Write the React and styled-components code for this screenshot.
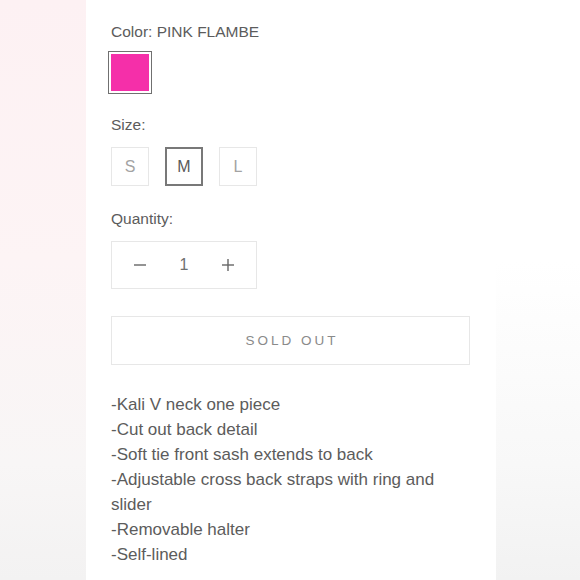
import React from 'react';
import styled, { createGlobalStyle } from 'styled-components';

// colours taken from the shot
let textColor = "#5c5c5c"
let lightLine = "#e7e7e7"
let pink = "#f52fa9"

const GlobalStyle = createGlobalStyle`
    html, body {
        margin: 0;
        padding: 0;
        background: #ffffff;
    }
    body {
        font-family: "Liberation Sans", Arial, sans-serif;
        color: ${textColor};
    }
`;

const Page = styled.div`
    display: flex;
    width: 580px;
    height: 580px;
    overflow: hidden;
`;

const SideBlur = styled.div`
    flex: ${props => (props.left ? '0 0 86px' : '1')};
    background: ${props => (props.left
        ? 'linear-gradient(to bottom, #fdf1f3 0%, #fdf4f5 45%, #f8f6f6 80%, #f3f2f2 100%)'
        : 'linear-gradient(to bottom, #ffffff 0%, #ffffff 45%, #f8f8f8 80%, #f2f2f2 100%)')};
`;

const Panel = styled.div`
    flex: 0 0 410px;
    background: #ffffff;
    padding: 22px 0 0 25px;
    box-sizing: border-box;
    display: flex;
    flex-direction: column;
`;

const Label = styled.div`
    font-size: 15.5px;
    line-height: 20px;
    margin-top: ${props => props.top || 0}px;
    margin-bottom: 12px;
`;

const Swatch = styled.div`
    width: 44px;
    height: 43px;
    border: 1px solid #707070;
    padding: 2px;
    box-sizing: border-box;
    margin: -3px 0 0 -3px;
`;

const SwatchFill = styled.div`
    width: 100%;
    height: 100%;
    background: ${props => props.color};
`;

const SizeRow = styled.div`
    display: flex;
    gap: 16px;
`;

const SizeBox = styled.div`
    width: 38px;
    height: 39px;
    box-sizing: border-box;
    display: flex;
    align-items: center;
    justify-content: center;
    font-size: 16px;
    border: ${props => (props.active ? '2px solid #787878' : `1px solid ${lightLine}`)};
    color: ${props => (props.active ? '#5a5a5a' : '#a3a3a3')};
`;

const QtyBox = styled.div`
    width: 146px;
    height: 48px;
    box-sizing: border-box;
    border: 1px solid ${lightLine};
    display: grid;
    grid-template-columns: 1fr 1fr 1fr;
    align-items: center;
    justify-items: center;
    padding: 0 6px;
`;

const QtyValue = styled.span`
    font-size: 16px;
    color: #707070;
`;

const SoldOut = styled.div`
    width: 359px;
    height: 49px;
    margin-top: 27px;
    box-sizing: border-box;
    border: 1px solid ${lightLine};
    display: flex;
    align-items: center;
    justify-content: center;
    font-size: 13.5px;
    letter-spacing: 3px;
    color: #8a8a8a;
    padding-left: 3px;
`;

const Description = styled.div`
    width: 359px;
    margin-top: 27px;
    font-size: 17px;
    line-height: 25px;
`;

const Line = styled.div``;

const Minus = () => (
    <svg width="14" height="14" viewBox="0 0 14 14">
        <line x1="1" y1="7" x2="13" y2="7" stroke="#666" strokeWidth="1.4" />
    </svg>
)

const Plus = () => (
    <svg width="14" height="14" viewBox="0 0 14 14">
        <line x1="1" y1="7" x2="13" y2="7" stroke="#666" strokeWidth="1.4" />
        <line x1="7" y1="1" x2="7" y2="13" stroke="#666" strokeWidth="1.4" />
    </svg>
)

const details = [
    "-Kali V neck one piece",
    "-Cut out back detail",
    "-Soft tie front sash extends to back",
    "-Adjustable cross back straps with ring and slider",
    "-Removable halter",
    "-Self-lined",
]

export default function App() {
    return (
        <Page>
            <GlobalStyle />
            <SideBlur left />
            <Panel>
                <Label>Color: PINK FLAMBE</Label>
                <Swatch>
                    <SwatchFill color={pink} />
                </Swatch>
                <Label top={21}>Size:</Label>
                <SizeRow>
                    <SizeBox>S</SizeBox>
                    <SizeBox active>M</SizeBox>
                    <SizeBox>L</SizeBox>
                </SizeRow>
                <Label top={23}>Quantity:</Label>
                <QtyBox>
                    <Minus />
                    <QtyValue>1</QtyValue>
                    <Plus />
                </QtyBox>
                <SoldOut>SOLD OUT</SoldOut>
                <Description>
                    {details.map(d => <Line key={d}>{d}</Line>)}
                </Description>
            </Panel>
            <SideBlur />
        </Page>
    )
}
